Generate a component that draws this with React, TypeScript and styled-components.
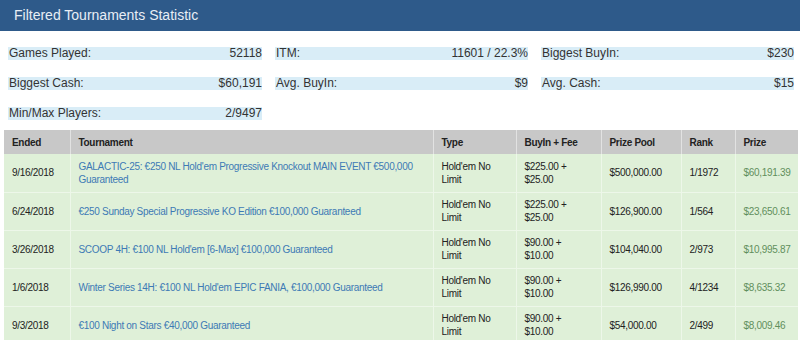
import React from 'react';
import styled, { createGlobalStyle } from 'styled-components';

const GlobalStyle = createGlobalStyle`
  html, body {
    margin: 0;
    padding: 0;
    background: #ffffff;
    font-family: 'Liberation Sans', Arial, sans-serif;
  }
  *, *::before, *::after {
    box-sizing: border-box;
  }
`;

const Page = styled.div`
  width: 800px;
  height: 340px;
  overflow: hidden;
  background: #fff;
`;

const TitleBar = styled.div`
  height: 31px;
  background: #2e5a8a;
  color: #e8eef5;
  font-size: 14px;
  line-height: 31px;
  padding-left: 14px;
`;

const StatsGrid = styled.div`
  display: grid;
  grid-template-columns: 254px 253px 253px;
  column-gap: 13px;
  row-gap: 17px;
  padding: 16px 0 0 8px;
`;

const Stat = styled.div`
  display: flex;
  justify-content: space-between;
  height: 13px;
  line-height: 13px;
  background: #d9edf7;
  color: #333;
  font-size: 12px;
  padding-left: 1px;
`;

const Table = styled.table`
  margin: 10px 0 0 4px;
  width: 794px;
  border-collapse: collapse;
  table-layout: fixed;
  font-size: 10px;
  letter-spacing: -0.3px;
  color: #222;
`;

const Th = styled.th<{ $w: number }>`
  width: ${p => p.$w}px;
  height: 24px;
  padding: 0 8px;
  background: #c8c8c8;
  border-left: 1px solid #e2e2e2;
  text-align: left;
  font-weight: bold;
  &:first-child {
    border-left: none;
  }
`;

const Row = styled.tr`
  background: #dff0d8;
  border-top: 1px solid #edf7e9;
  &:first-child {
    border-top: none;
  }
`;

const Td = styled.td<{ $tone?: 'link' | 'prize' }>`
  height: 38px;
  padding: 0 8px;
  line-height: 13px;
  vertical-align: middle;
  border-left: 1px solid #edf7e9;
  color: ${p => (p.$tone === 'link' ? '#3d7ab5' : p.$tone === 'prize' ? '#5f8f5c' : '#222')};
  &:first-child {
    border-left: none;
  }
`;

const stats: [string, string][] = [
  ['Games Played:', '52118'],
  ['ITM:', '11601 / 22.3%'],
  ['Biggest BuyIn:', '$230'],
  ['Biggest Cash:', '$60,191'],
  ['Avg. BuyIn:', '$9'],
  ['Avg. Cash:', '$15'],
  ['Min/Max Players:', '2/9497'],
];

const columns: [string, number][] = [
  ['Ended', 66],
  ['Tournament', 363],
  ['Type', 83],
  ['BuyIn + Fee', 85],
  ['Prize Pool', 80],
  ['Rank', 54],
  ['Prize', 63],
];

const rows = [
  {
    ended: '9/16/2018',
    name: 'GALACTIC-25: €250 NL Hold\'em Progressive Knockout MAIN EVENT €500,000 Guaranteed',
    buyIn: '$225.00 +',
    fee: '$25.00',
    pool: '$500,000.00',
    rank: '1/1972',
    prize: '$60,191.39',
  },
  {
    ended: '6/24/2018',
    name: '€250 Sunday Special Progressive KO Edition €100,000 Guaranteed',
    buyIn: '$225.00 +',
    fee: '$25.00',
    pool: '$126,900.00',
    rank: '1/564',
    prize: '$23,650.61',
  },
  {
    ended: '3/26/2018',
    name: 'SCOOP 4H: €100 NL Hold\'em [6-Max] €100,000 Guaranteed',
    buyIn: '$90.00 +',
    fee: '$10.00',
    pool: '$104,040.00',
    rank: '2/973',
    prize: '$10,995.87',
  },
  {
    ended: '1/6/2018',
    name: 'Winter Series 14H: €100 NL Hold\'em EPIC FANIA, €100,000 Guaranteed',
    buyIn: '$90.00 +',
    fee: '$10.00',
    pool: '$126,990.00',
    rank: '4/1234',
    prize: '$8,635.32',
  },
  {
    ended: '9/3/2018',
    name: '€100 Night on Stars €40,000 Guaranteed',
    buyIn: '$90.00 +',
    fee: '$10.00',
    pool: '$54,000.00',
    rank: '2/499',
    prize: '$8,009.46',
  },
];

const App: React.FC = () => {
  return (
    <Page>
      <GlobalStyle />
      <TitleBar>Filtered Tournaments Statistic</TitleBar>
      <StatsGrid>
        {stats.map(([label, value]) => (
          <Stat key={label}>
            <span>{label}</span>
            <span>{value}</span>
          </Stat>
        ))}
      </StatsGrid>
      <Table>
        <thead>
          <tr>
            {columns.map(([title, w]) => (
              <Th key={title} $w={w}>
                {title}
              </Th>
            ))}
          </tr>
        </thead>
        <tbody>
          {rows.map(r => (
            <Row key={r.ended + r.rank}>
              <Td>{r.ended}</Td>
              <Td $tone="link">{r.name}</Td>
              <Td>
                Hold'em No
                <br />
                Limit
              </Td>
              <Td>
                {r.buyIn}
                <br />
                {r.fee}
              </Td>
              <Td>{r.pool}</Td>
              <Td>{r.rank}</Td>
              <Td $tone="prize">{r.prize}</Td>
            </Row>
          ))}
        </tbody>
      </Table>
    </Page>
  );
};

export default App;
